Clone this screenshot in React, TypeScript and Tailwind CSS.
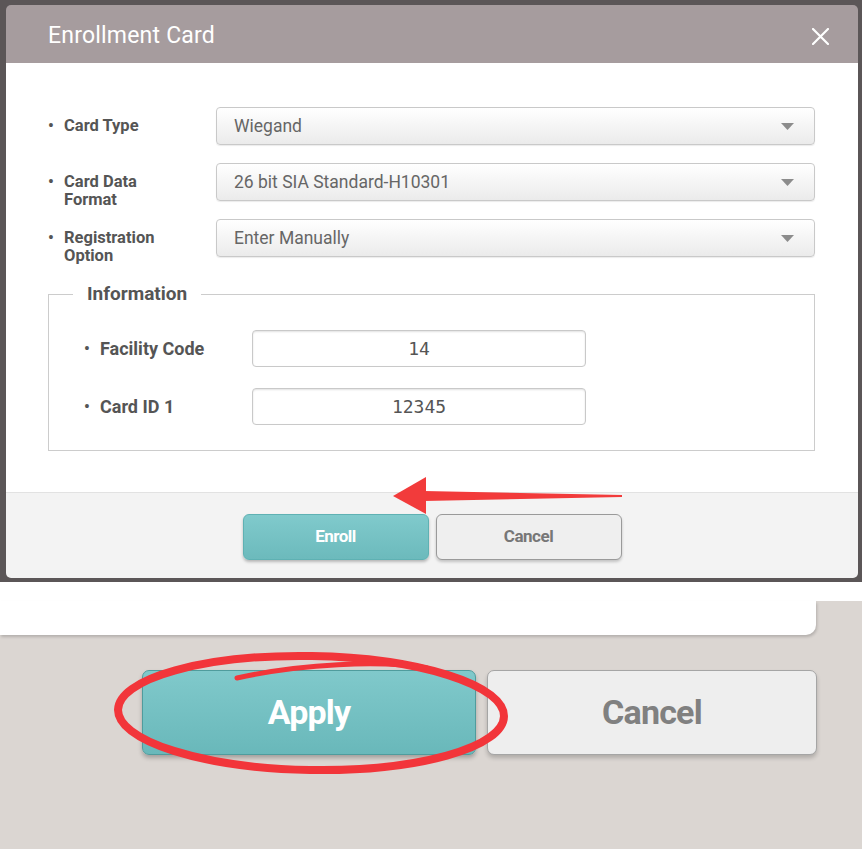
import React from "react";

const fields = [
    { label: ["Card Type"], value: "Wiegand" },
    { label: ["Card Data", "Format"], value: "26 bit SIA Standard-H10301" },
    { label: ["Registration", "Option"], value: "Enter Manually" },
];

const info = [
    { label: "Facility Code", value: "14" },
    { label: "Card ID 1", value: "12345" },
];

function Caret() {
    return (
        <svg width="13" height="7" viewBox="0 0 13 7">
            <path d="M0 0 L13 0 L6.5 7 Z" fill="#8c8c8c" />
        </svg>
    );
}

function SelectBox({ value }: { value: string }) {
    return (
        <div className="flex-1 h-[38px] flex items-center justify-between pl-[17px] pr-[20px] rounded-[4px] border border-[#c9c9c9] bg-gradient-to-b from-white to-[#ebebeb] shadow-[0_1px_1px_rgba(0,0,0,0.08)]">
            <span className="text-[17.5px] text-[#666]">{value}</span>
            <Caret />
        </div>
    );
}

function Label({ lines }: { lines: string[] }) {
    return (
        <div className="w-[168px] h-[38px] flex pt-[10px] text-[16.5px] leading-[18px] font-bold text-[#555]">
            <span className="w-[16px] text-[16px]">•</span>
            <div>
                {lines.map((l) => (
                    <div key={l}>{l}</div>
                ))}
            </div>
        </div>
    );
}

export default function App() {
    return (
        <div className="w-[862px] h-[852px] bg-white relative overflow-hidden font-['Roboto',sans-serif]">
            {/* modal on dark backdrop */}
            <div className="bg-[#5b5657] pt-[5px] pl-[6px] pr-[4px] pb-[4px]">
                <div className="rounded-[5px] overflow-hidden">
                    <div className="h-[58px] bg-[#a69c9e] flex items-center justify-between pl-[42px] pr-[29px] pt-[4px]">
                        <span className="text-white text-[23px] tracking-[0.2px]">Enrollment Card</span>
                        <svg width="17" height="17" viewBox="0 0 17 17">
                            <path d="M1 1 L16 16 M16 1 L1 16" stroke="white" strokeWidth="2.2" strokeLinecap="round" />
                        </svg>
                    </div>

                    <div className="h-[429px] bg-white pl-[42px] pr-[43px] pt-[44px]">
                        <div className="flex flex-col gap-[18px]">
                            {fields.map((f) => (
                                <div key={f.value} className="flex items-start h-[38px]">
                                    <Label lines={f.label} />
                                    <SelectBox value={f.value} />
                                </div>
                            ))}
                        </div>

                        <fieldset className="mt-[27px] border border-[#cccccc] pb-[25px]">
                            <legend className="ml-[24px] px-[14px] text-[19px] leading-[20px] font-bold text-[#555]">
                                Information
                            </legend>
                            <div className="pt-[26px] pl-[35px] flex flex-col gap-[21px]">
                                {info.map((r) => (
                                    <div key={r.label} className="flex items-center">
                                        <div className="w-[168px] flex items-center text-[18px] font-bold text-[#555]">
                                            <span className="w-[16px] text-[16px]">•</span>
                                            {r.label}
                                        </div>
                                        <div className="w-[334px] h-[37px] flex items-center justify-center rounded-[4px] border border-[#c9c9c9] shadow-[inset_0_1px_2px_rgba(0,0,0,0.12)] font-['DejaVu_Sans_Mono',monospace] text-[18px] text-[#555]">
                                            {r.value}
                                        </div>
                                    </div>
                                ))}
                            </div>
                        </fieldset>
                    </div>

                    <div className="h-[86px] bg-[#f3f3f3] border-t border-[#e2e2e2] flex justify-center gap-[7px] pt-[21px]">
                        <button className="w-[186px] h-[46px] rounded-[6px] border border-[#5fb1b3] bg-gradient-to-b from-[#80cacc] to-[#6cbabc] text-white text-[17px] font-bold tracking-[-0.5px] shadow-[0_2px_3px_rgba(0,0,0,0.25)]">
                            Enroll
                        </button>
                        <button className="w-[186px] h-[46px] rounded-[6px] border border-[#9a9a9a] bg-[#efefef] text-[#777] text-[17px] font-bold tracking-[-0.5px] shadow-[0_2px_3px_rgba(0,0,0,0.2)]">
                            Cancel
                        </button>
                    </div>
                </div>
            </div>

            {/* page behind the modal */}
            <div className="h-[19px] bg-white" />
            <div className="h-[248px] bg-[#dbd6d2]">
                <div className="w-[816px] h-[34px] bg-white rounded-br-[10px] shadow-[1px_2px_3px_rgba(0,0,0,0.18)]" />
                <div className="flex justify-end gap-[11px] pr-[45px] mt-[35px]">
                    <button className="w-[334px] h-[85px] rounded-[7px] border border-[#4f9c9d] bg-gradient-to-b from-[#80c9cb] to-[#69b8ba] text-white text-[34px] font-bold tracking-[-0.8px] shadow-[0_3px_4px_rgba(0,0,0,0.25)]">
                        Apply
                    </button>
                    <button className="w-[330px] h-[85px] rounded-[7px] border border-[#a5a5a5] bg-[#eeeeee] text-[#808080] text-[34px] font-bold tracking-[-0.8px] shadow-[0_3px_4px_rgba(0,0,0,0.2)]">
                        Cancel
                    </button>
                </div>
            </div>

            {/* red annotations */}
            <svg className="absolute left-0 top-0 pointer-events-none" width="862" height="852" viewBox="0 0 862 852">
                <path d="M393 496 L426 477 L426 514 Z" fill="#f23b3b" />
                <path d="M424 491 L622 495 L622 497 L424 501 Z" fill="#f23b3b" />
                <ellipse cx="311" cy="713" rx="193" ry="57" fill="none" stroke="#f2353a" strokeWidth="8" transform="rotate(1 311 713)" />
                <path d="M237 678 C 300 664, 380 660, 427 668" fill="none" stroke="#f2353a" strokeWidth="5" strokeLinecap="round" />
            </svg>
        </div>
    );
}
